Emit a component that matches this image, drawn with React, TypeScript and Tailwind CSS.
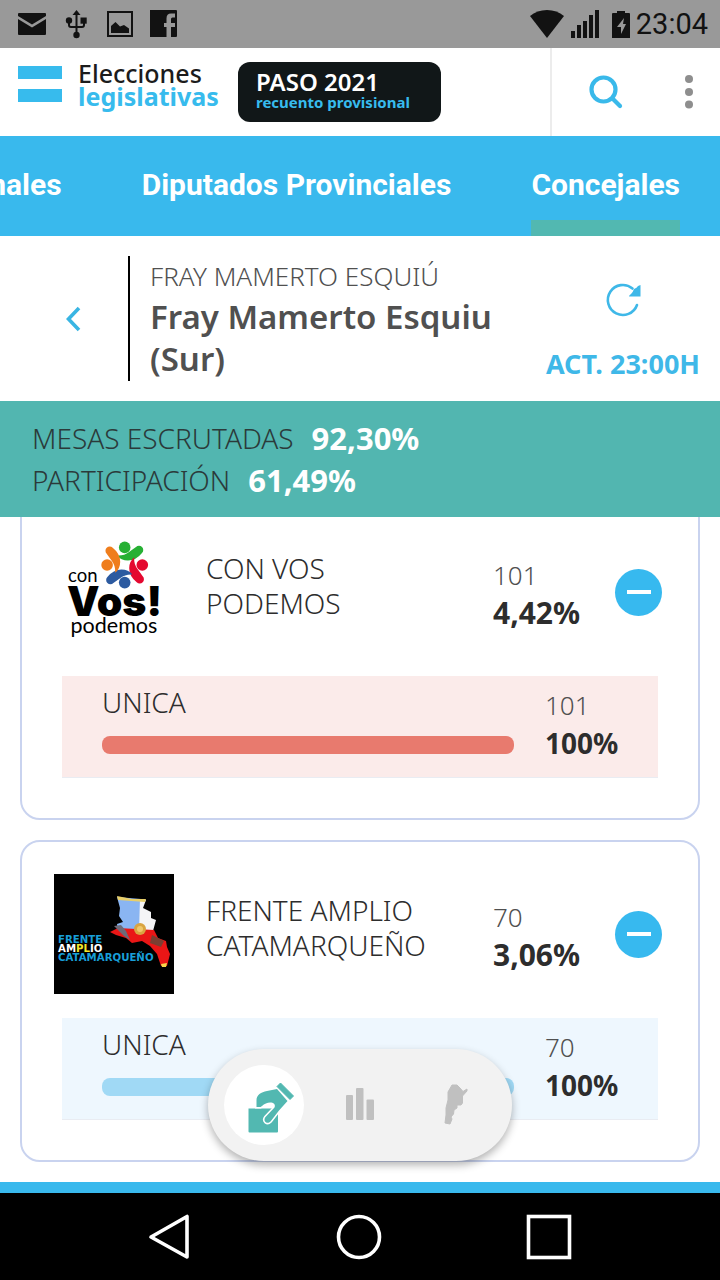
import React from "react";

type Party = {
  id: string;
  name: string[];
  votes: string;
  share: string;
  logo: React.ReactNode;
  panel: string;
  bar: string;
};

const PERSON = "M63 23.500 Q70 24 75 20 L82 15 A4.200 4.200 0 0 1 88 21 Q82 28.500 74 28.500 Q67 28.500 63 23.500Z";

function PodemosLogo() {
  const people = [
    { color: "#27b034", turn: "rotate(0 70.7 33)" },
    { color: "#e4082f", turn: "rotate(90 70.7 33)" },
    { color: "#2c5aa0", turn: "rotate(180 70.7 33)" },
    { color: "#ef7d1c", turn: "rotate(270 70.7 33)" },
  ];
  return (
    <svg viewBox="0 0 120 120" className="size-[120px] shrink-0" role="img" aria-label="Con Vos Podemos">
      {people.map((p) => (
        <g key={p.color} fill={p.color} transform={p.turn}>
          <circle cx="70.700" cy="15.400" r="5.800" />
          <path d={PERSON} />
        </g>
      ))}
      <g fill="#000">
        <text x="14" y="49.500" fontSize="18.500" fontFamily="Lato, sans-serif">con</text>
        <text x="13" y="84" fontSize="41" fontWeight="900" fontFamily="Inter, sans-serif">Vos!</text>
        <text x="16.500" y="100.500" fontSize="21.500" fontFamily="Lato, sans-serif">podemos</text>
      </g>
    </svg>
  );
}

function FrenteLogo() {
  return (
    <svg viewBox="0 0 120 120" className="size-[120px] shrink-0" role="img" aria-label="Frente Amplio Catamarqueño">
      <rect width="120" height="120" fill="#000" />
      <path d="M63 23 L87 25 L86 57 L64 58 L63 50 L69 48 L65 42 L66 34Z" fill="#8ab5f2" />
      <path d="M86 25 L92 26 L89 34 L97 38 L97 44 L102 46 L99 57 L85 57Z" fill="#f4f4f6" />
      <path d="M63 22 L78 25 L92 25 L91 28 L64 26Z" fill="#e8cf6a" />
      <path d="M56 58 L64 54 L100 56 L104 64 L112 67 L113 73 L116 80 L113 92 L107 92 L103 80 L96 72 L88 67 L78 69 L72 64 L62 61Z" fill="#ea1616" />
      <path d="M60 52 L67 51 L72 57 L76 66 L70 62Z" fill="#6d6a78" />
      <path d="M98 61 L110 67 L107 73 L96 69Z" fill="#7b3f32" />
      <path d="M107 90 L113 89 L112 93 L108 93Z" fill="#f5d84a" />
      <circle cx="86" cy="55" r="6" fill="#d9a441" />
      <circle cx="86" cy="55" r="3" fill="#f0c76a" />
      <g fontFamily="DejaVu Sans, sans-serif" fontWeight="700" fontSize="10.200">
        <text x="4" y="69" fill="#189fd8">FRENTE</text>
        <text x="4" y="78" fill="#fff">
          AM<tspan fill="#f2e829">PL</tspan>IO
        </text>
        <text x="4" y="87" fill="#189fd8">CATAMARQUEÑO</text>
      </g>
    </svg>
  );
}

const parties: Party[] = [
  {
    id: "podemos",
    name: ["CON VOS", "PODEMOS"],
    votes: "101",
    share: "4,42%",
    logo: <PodemosLogo />,
    panel: "bg-[#fbebea]",
    bar: "bg-[#e87a6e]",
  },
  {
    id: "frente",
    name: ["FRENTE AMPLIO", "CATAMARQUEÑO"],
    votes: "70",
    share: "3,06%",
    logo: <FrenteLogo />,
    panel: "bg-[#eef7fe]",
    bar: "bg-[#a0d9f5]",
  },
];

function StatusBar() {
  return (
    <div className="flex h-12 items-center justify-between bg-[#999999] pl-4 pr-3 text-[#121212]">
      <div className="flex items-center">
        <svg width="32" height="32" viewBox="0 0 32 32" fill="currentColor">
          <path d="M2 6 Q2 5 3 5 H29 Q30 5 30 6 V8 L16 16.500 L2 8Z M2 11 L16 19.500 L30 11 V26 Q30 27 29 27 H3 Q2 27 2 26Z" />
        </svg>
        <svg width="32" height="32" viewBox="0 0 32 32" className="ml-3" fill="none" stroke="currentColor" strokeWidth="2">
          <path d="M16.500 5 V26 M9 13 V17 Q9 19 11 19 H22 Q24 19 24 17 V13" />
          <path d="M16.500 2 L20.500 7 H12.500Z" fill="currentColor" stroke="none" />
          <circle cx="16.500" cy="27" r="3.200" fill="currentColor" stroke="none" />
          <circle cx="9" cy="12.500" r="3.200" fill="currentColor" stroke="none" />
          <path d="M20.500 9.500 h6.200 v6.200 h-6.200Z" fill="currentColor" stroke="none" />
        </svg>
        <svg width="32" height="32" viewBox="0 0 32 32" className="ml-3" fill="currentColor">
          <path fillRule="evenodd" d="M3 3 H29 V29 H3Z M5 5 V27 H27 V5Z" />
          <path d="M7 25 V18 L11.500 14 L16 18.500 L20 17 L25 20.500 V25Z" />
        </svg>
        <svg width="32" height="32" viewBox="0 0 32 32" className="ml-3" fill="currentColor">
          <path d="M3 2 H29 Q30 2 30 3 V28 Q30 29 29 29 H24 V19 H28 V15 H24 V11 Q24 9.500 25.500 9.500 H28 V5.500 H24 Q19.500 5.500 19.500 10.500 V15 H17 V19 H19.500 V29 H3Z" transform="translate(-1 0)" />
        </svg>
      </div>
      <div className="flex items-center">
        <svg width="34" height="30" viewBox="0 0 34 30" fill="currentColor">
          <path d="M17 29 L0 7 Q7 1 17 1 Q27 1 34 7Z" />
        </svg>
        <svg width="28" height="30" viewBox="0 0 28 30" className="ml-[7px]" fill="currentColor">
          <path d="M0 22h4v7H0Z M6 16h4v13H6Z M12 12h4v17h-4Z M18 6h4v23h-4Z M24 1h4v28h-4Z" />
        </svg>
        <svg width="18" height="30" viewBox="0 0 18 30" className="ml-[13px]" fill="currentColor">
          <path fillRule="evenodd" d="M5 2 H13 V4 H17 Q18 4 18 5 V29 H0 V5 Q0 4 1 4 H5Z M12 9 L5 18 H9 V25 L14 15 H11Z" />
        </svg>
        <span className="ml-[6px] font-['Roboto',sans-serif] text-[29px] leading-8">23:04</span>
      </div>
    </div>
  );
}

function Header() {
  return (
    <header className="flex h-[88px] bg-white">
      <div className="flex min-w-0 flex-1 items-start pl-[18px] pt-[14px]">
        <div className="flex flex-col gap-[10px] pt-1">
          <span className="h-[13px] w-11 bg-[#37bbed]" />
          <span className="h-[13px] w-11 bg-[#37bbed]" />
        </div>
        <div className="ml-4 w-40 text-[25px] leading-[23px]">
          <p className="font-medium text-[#1c1c1c]">Elecciones</p>
          <p className="font-bold text-[#37bbed]">legislativas</p>
        </div>
        <div className="flex h-[60px] w-[203px] flex-col justify-center rounded-xl bg-[#111718] pl-[18px] pb-1">
          <p className="text-2xl leading-6 font-semibold text-white">PASO 2021</p>
          <p className="text-[15px] leading-4 font-bold text-[#37bbed]">recuento provisional</p>
        </div>
      </div>
      <button aria-label="Buscar" className="flex w-[110px] items-center justify-center border-l-2 border-[#ececec] text-[#39b9ea]">
        <svg width="36" height="36" viewBox="0 0 36 36" fill="none" stroke="currentColor" strokeWidth="4.200" strokeLinecap="round">
          <circle cx="15.500" cy="15.500" r="12" />
          <path d="M24.500 24.500 L32 32" />
        </svg>
      </button>
      <button aria-label="Más opciones" className="flex w-[60px] items-center justify-center pr-[2px] text-[#8e8e8e]">
        <svg width="8" height="34" viewBox="0 0 8 34" fill="currentColor">
          <circle cx="4" cy="4" r="4" />
          <circle cx="4" cy="17" r="4" />
          <circle cx="4" cy="29.500" r="4" />
        </svg>
      </button>
    </header>
  );
}

function Tabs() {
  return (
    <nav className="flex h-[100px] justify-end gap-20 overflow-hidden bg-[#39b9ed] px-10 font-['Roboto',sans-serif] text-[30px] leading-[98px] font-bold whitespace-nowrap text-white">
      <a href="#nacionales">Diputados Nacionales</a>
      <a href="#provinciales">Diputados Provinciales</a>
      <a href="#concejales" aria-current="page" className="border-b-[16px] border-[#52b8b1]">
        Concejales
      </a>
    </nav>
  );
}

function Location() {
  return (
    <section className="flex h-[165px] items-stretch bg-white py-5 pr-5 text-[#505050]">
      <button aria-label="Volver" className="flex w-32 items-center justify-center pl-5 text-[#39b5e3]">
        <svg width="16" height="26" viewBox="0 0 16 26" fill="none" stroke="currentColor" strokeWidth="3.600">
          <path d="M13 2 L2.500 13 L13 24" />
        </svg>
      </button>
      <div className="min-w-0 flex-1 border-l-2 border-black pl-5">
        <p className="text-[26px] leading-10 font-light">FRAY MAMERTO ESQUIÚ</p>
        <h1 className="text-[33px] leading-[42px] font-semibold">
          Fray Mamerto Esquiu
          <br />
          (Sur)
        </h1>
      </div>
      <div className="flex flex-col items-end text-[#3fb8e8]">
        <button aria-label="Actualizar" className="mt-[26px] mr-[59px]">
          <svg width="36" height="36" viewBox="0 0 36 36" fill="none" stroke="currentColor" strokeWidth="2.600" strokeLinecap="round">
            <path d="M27.500 6.500 A15 15 0 1 0 32 23" />
            <path d="M35.500 3 V14.500 H24 Q24 13 26 12 Q28 10 29 7 Q32 6 33 4Z" fill="currentColor" stroke="none" />
          </svg>
        </button>
        <p className="mt-7 text-[27px] leading-9 font-bold">ACT. 23:00H</p>
      </div>
    </section>
  );
}

function Summary() {
  return (
    <dl className="bg-[#52b6b0] px-8 py-4 text-[28px] leading-[42px] text-[#2b3a3a]">
      <div className="flex gap-[18px]">
        <dt className="font-light">MESAS ESCRUTADAS</dt>
        <dd className="text-[31px] font-bold text-white">92,30%</dd>
      </div>
      <div className="flex gap-[18px]">
        <dt className="font-light">PARTICIPACIÓN</dt>
        <dd className="text-[31px] font-bold text-white">61,49%</dd>
      </div>
    </dl>
  );
}

function PartyCard({ party }: { party: Party }) {
  return (
    <article className="rounded-[20px] border-2 border-[#c9d3ef] bg-white pt-8 pb-10 text-[#2d2d2d]">
      <div className="flex items-center pr-9 pl-8">
        {party.logo}
        <h2 className="ml-8 flex-1 pb-3 text-[28px] leading-[35px] font-light">
          {party.name[0]}
          <br />
          {party.name[1]}
        </h2>
        <div className="w-[122px] pt-1 leading-[38px]">
          <p className="text-[26px] font-light text-[#505050]">{party.votes}</p>
          <p className="text-[30px] font-bold">{party.share}</p>
        </div>
        <button aria-label={`Contraer ${party.name.join(" ")}`} className="flex size-[47px] items-center justify-center rounded-full bg-[#37b9ef]">
          <span className="h-1 w-6 bg-white" />
        </button>
      </div>
      <div className={`mx-10 mt-6 flex h-[102px] items-start border-b border-[#e9ecf2] pl-10 ${party.panel}`}>
        <div className="flex-1">
          <h3 className="text-[28px] leading-[52px] font-light">UNICA</h3>
          <div className={`mt-2 h-[18px] rounded-lg ${party.bar}`} />
        </div>
        <div className="ml-[31px] w-[113px] pt-[10px] leading-[38px]">
          <p className="text-[26px] font-light text-[#505050]">{party.votes}</p>
          <p className="text-[28px] font-bold">100%</p>
        </div>
      </div>
    </article>
  );
}

function ViewSwitcher() {
  return (
    <div className="absolute bottom-[21px] left-1/2 flex h-28 w-[304px] -translate-x-1/2 items-center justify-between rounded-full bg-[#f2f2f2] px-4 shadow-[0_4px_8px_rgba(0,0,0,0.3)]">
      <button aria-label="Resultados" className="flex size-20 items-center justify-center rounded-full bg-white">
        <svg width="80" height="80" viewBox="0 0 80 80" fill="#52b8b1">
          <path d="M24.500 43.500 H54 V66.500 Q54 67.500 53 67.500 H25.500 Q24.500 67.500 24.500 66.500Z" />
          <path
            d="M32.500 42 V35 C32.500 30 37 27 43 26 L53 24 L63.500 36 L55 45.500 L46.500 56.500 C43 60 38.500 56 41.500 52 L50.500 42.500 C53 36.500 43 35.500 38 41 L36.500 42Z"
            stroke="#fff"
            strokeWidth="3"
            paintOrder="stroke"
          />
          <path d="M53 21.500 L56.500 18 L69.500 31 L66 34.500Z" stroke="#52b8b1" strokeLinejoin="round" />
        </svg>
      </button>
      <button aria-label="Estadísticas" className="flex size-20 items-center justify-center">
        <svg width="28" height="36" viewBox="0 0 28 36" fill="#c0c0c0">
          <rect y="8" width="7" height="25" rx="1" />
          <rect x="10" y="1" width="7.500" height="32" rx="1" />
          <rect x="20.500" y="12.500" width="7.500" height="20.500" rx="1" />
        </svg>
      </button>
      <button aria-label="Mapa" className="flex size-20 items-center justify-center">
        <svg width="24" height="42" viewBox="0 0 24 42" fill="#c0c0c0">
          <path d="M8 1 L13 1 L16 4 L19 7.500 L23 5 V7 L18.500 12 L18.500 19 L17 21 L13 21 L13 24 L10 26 L9.500 30 L7 33 L8 35 L6 40 L1 39 L1.500 35 L2 31 L2 24 L4 16 L4 8Z" stroke="#c0c0c0" strokeLinejoin="round" />
        </svg>
      </button>
    </div>
  );
}

function SystemNav() {
  return (
    <div className="flex h-[87px] items-center justify-between bg-black pr-[148px] pl-[146px]">
      <button aria-label="Atrás">
        <svg width="46" height="46" viewBox="0 0 46 46" fill="none" stroke="#fff" strokeWidth="3.600" strokeLinejoin="round">
          <path d="M41 2.500 V43 L5 23Z" />
        </svg>
      </button>
      <button aria-label="Inicio">
        <svg width="46" height="46" viewBox="0 0 46 46" fill="none" stroke="#fff" strokeWidth="3.600">
          <circle cx="23" cy="23" r="20.500" />
        </svg>
      </button>
      <button aria-label="Recientes">
        <svg width="46" height="46" viewBox="0 0 46 46" fill="none" stroke="#fff" strokeWidth="3.600">
          <rect x="2.500" y="2.500" width="41" height="41" />
        </svg>
      </button>
    </div>
  );
}

export default function App() {
  return (
    <div className="flex min-h-screen flex-col bg-white font-['Noto_Sans',sans-serif]">
      <StatusBar />
      <Header />
      <Tabs />
      <Location />
      <Summary />
      <main className="relative flex-1 overflow-hidden px-5 pb-5">
        <div className="-mt-[19px] flex flex-col gap-5">
          {parties.map((party) => (
            <PartyCard key={party.id} party={party} />
          ))}
        </div>
        <ViewSwitcher />
      </main>
      <div className="h-[11px] bg-[#39b9ed]" />
      <SystemNav />
    </div>
  );
}
